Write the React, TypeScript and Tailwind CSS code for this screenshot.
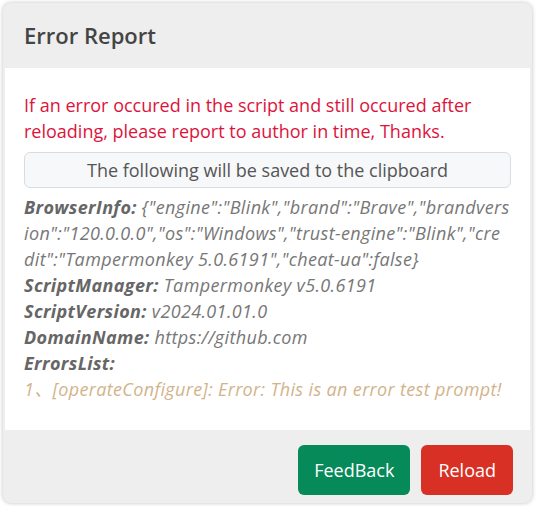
export default function App() {
  const info = [
    {
      label: "BrowserInfo:",
      value:
        '{"engine":"Blink","brand":"Brave","brandversion":"120.0.0.0","os":"Windows","trust-engine":"Blink","credit":"Tampermonkey 5.0.6191","cheat-ua":false}',
    },
    { label: "ScriptManager:", value: "Tampermonkey v5.0.6191" },
    { label: "ScriptVersion:", value: "v2024.01.01.0" },
    { label: "DomainName:", value: "https://github.com" },
    { label: "ErrorsList:", value: "" },
  ];

  return (
    <div className="min-h-screen bg-white font-['Open_Sans','Noto_Sans_CJK_SC',sans-serif]">
      <div className="ml-[3px] pt-[3px] w-[529px]">
        <div className="rounded-lg bg-[#eeeeee] shadow-[0_0_4px_rgba(0,0,0,0.25)]">
          <div className="flex h-[65px] items-center px-[21px]">
            <h2 className="text-[22px] font-semibold text-[#444]">Error Report</h2>
          </div>

          <div className="mx-[2px] bg-white px-[19px] pt-6 pb-7">
            <p className="text-[18px] leading-[26px] text-[#dc143c]">
              If an error occured in the script and still occured after reloading, please report to author in time,
              Thanks.
            </p>
            <div className="mt-2 flex h-9 items-center justify-center rounded-md border border-[#d8dde3] bg-[#f6f8fa] text-[18px] text-[#555]">
              The following will be saved to the clipboard
            </div>
            <div className="mt-[6px] break-all text-[18px] leading-[26px] italic tracking-[0.35px]">
              {info.map((row) => (
                <div key={row.label}>
                  <span className="font-bold text-[#666]">{row.label}</span>
                  {row.value && <span className="text-[#777]"> {row.value}</span>}
                </div>
              ))}
              <div className="text-[#d2b48c]">1、[operateConfigure]: Error: This is an error test prompt!</div>
            </div>
          </div>

          <div className="flex justify-end gap-[11px] pt-[15px] pr-[19px] pb-[8px]">
            <button className="h-[50px] rounded-md bg-[#078a59] px-4 text-[18px] text-white">FeedBack</button>
            <button className="h-[50px] rounded-md bg-[#d93025] px-[17px] text-[18px] text-white">Reload</button>
          </div>
        </div>
      </div>
    </div>
  );
}
